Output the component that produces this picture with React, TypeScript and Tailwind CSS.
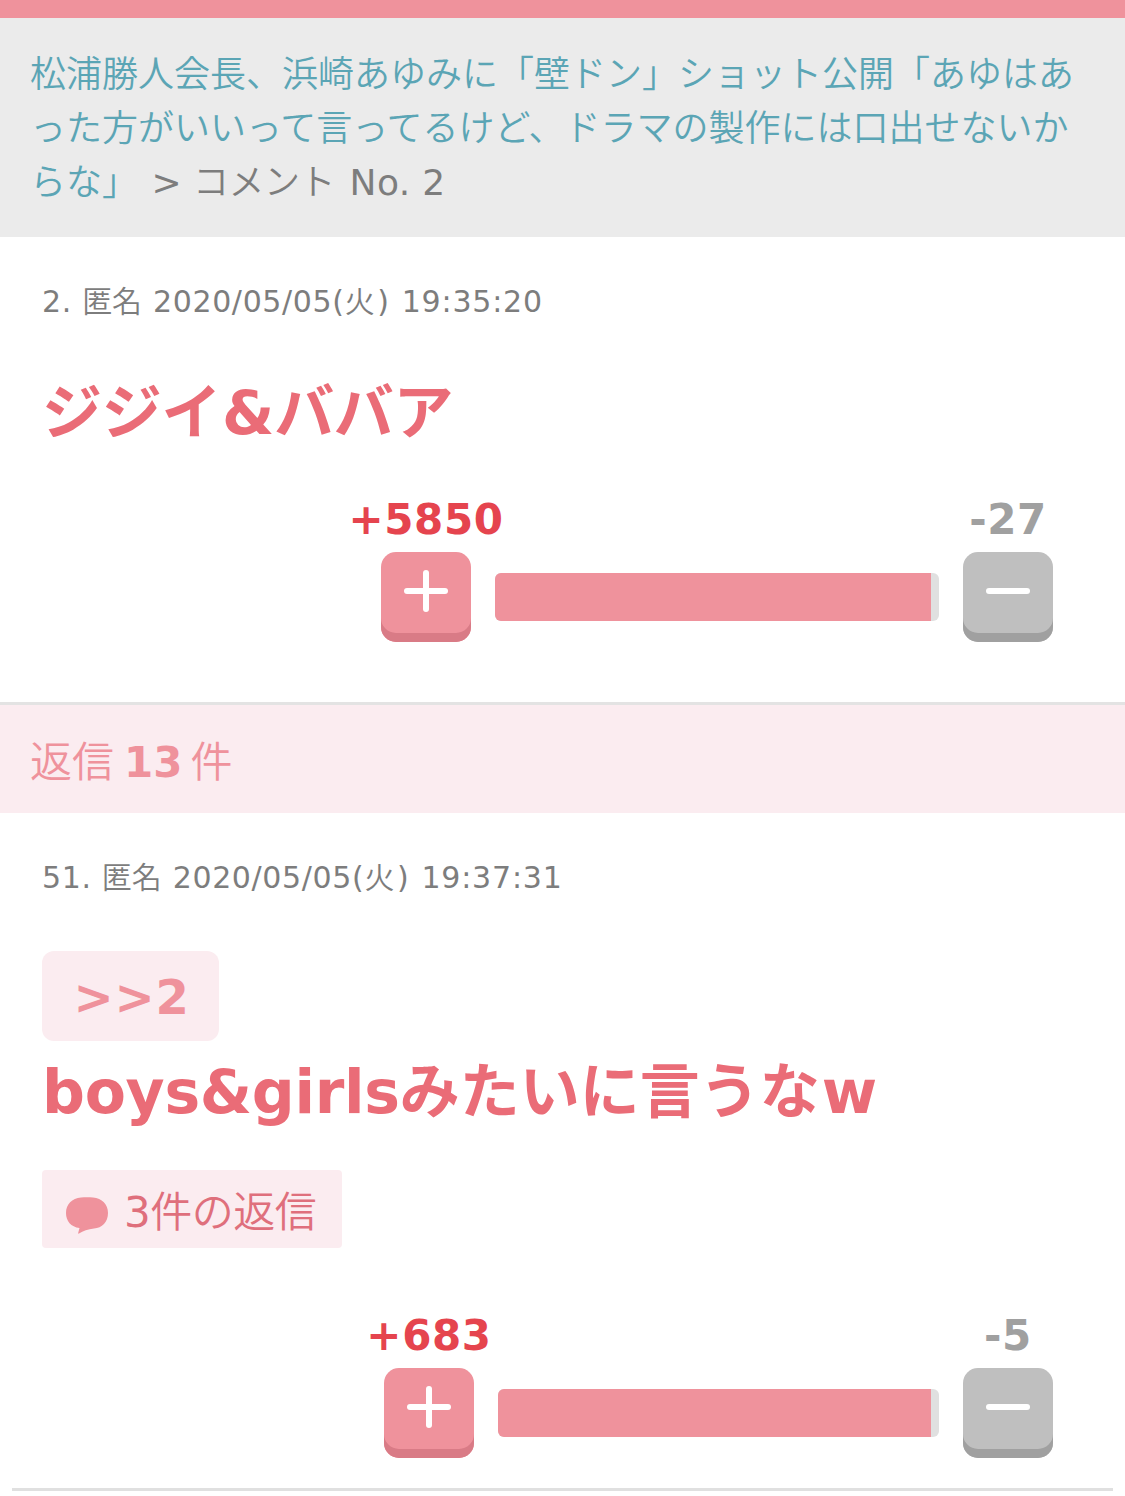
import clsx from "clsx"

type VoteProps = {
    plus: number
    minus: number
    barClass: string
}

const Meta = ({ no, time }: { no: number; time: string }) => {
    return (
        <div className="flex h-11 items-center pl-[42px] pt-0.5 text-[30px] leading-[44px] tracking-[0.65px] text-[#7d7d7d]">
            <p className="whitespace-pre">
                {no}. <span className="font-[350] tracking-[-0.2px]">匿名</span><span className="ml-px"> 2020/05/05(</span><span className="font-[350]">火</span><span className="ml-0.5">)</span>
            </p>
            <span className="ml-3 tracking-[0.8px]">{time}</span>
        </div>
    )
}

const VoteButton = ({ type }: { type: "plus" | "minus" }) => {
    return (
        <button
            type="button"
            className={clsx(
                "flex h-[90px] w-[90px] justify-center rounded-[15px] pt-[17px]",
                type === "plus"
                    ? "bg-[#ef929c] shadow-[inset_0_-9px_0_#d97b86]"
                    : "bg-[#bfbfbf] shadow-[inset_0_-9px_0_#a0a0a0]"
            )}
        >
            <svg width="44" height="44" viewBox="0 0 44 44" stroke="#fff" strokeWidth="6" strokeLinecap="round">
                <path d="M3 22H41" />
                {type === "plus" && <path d="M22 4V40" />}
            </svg>
        </button>
    )
}

const Votes = ({ plus, minus, barClass }: VoteProps) => {
    const percent = (plus / (plus + minus)) * 100

    return (
        <div className="flex items-end justify-end gap-6 pr-[72px]">
            <div className="flex w-[90px] flex-col items-center">
                <span className="whitespace-nowrap pt-0.5 text-[42px] font-bold leading-[64px] tracking-[0.6px] text-[#e5444e]">+{plus}</span>
                <VoteButton type="plus" />
            </div>
            <div className={clsx("mb-[21px] h-12 overflow-hidden rounded-md bg-[#e0e0e0]", barClass)}>
                {/* the minus side always keeps a visible sliver */}
                <div className="h-full max-w-[98.1%] bg-[#ef929c]" style={{ width: `${percent}%` }}></div>
            </div>
            <div className="flex w-[90px] flex-col items-center">
                <span className="whitespace-nowrap pt-0.5 text-[42px] font-bold leading-[64px] tracking-[0.6px] text-[#a0a0a0]">-{minus}</span>
                <VoteButton type="minus" />
            </div>
        </div>
    )
}

const Bubble = () => {
    return (
        <svg className="mt-1.5" width="42" height="37" viewBox="0 0 42 37" fill="#ef929c">
            <path d="M15 0.500C19 0 23 0 27 0.500C36 1.500 42 7 42 16C42 25 36 31 28 31.500C22 32 17 34 13 36.500C12.300 37 12 36.500 12.300 35.500L13.500 31C5 30 0 24 0 16C0 7 6 1.500 15 0.500Z" />
        </svg>
    )
}

const Header = () => {
    return (
        <header className="h-[237px] border-t-[18px] border-[#ef929c] bg-[#ebebeb] pl-[30px] pt-[30px] text-[36px] leading-[54px] text-[#7d7d7d]">
            <a href="#" className="font-[350] text-[#5ba5b5]">
                松浦勝人会長、浜崎あゆみに「壁ドン」ショット公開「あゆはあ<br />
                った方がいいって言ってるけど、ドラマの製作には口出せないか<br />
                らな」
            </a>
            <span className="ml-0.5 whitespace-pre"> &gt; <span className="font-[350] tracking-[-0.5px]">コメント</span> <span className="ml-[3px] tracking-[0.4px]">No. 2</span></span>
        </header>
    )
}

export default function App() {
    return (
        <div lang="ja" className="min-h-[1496px] w-[1125px] overflow-hidden bg-white font-['DejaVu_Sans','Noto_Sans_CJK_JP',sans-serif]">
            <Header />

            <article className="h-[465px] pt-[42px]">
                <Meta no={2} time="19:35:20" />
                <p className="mt-[45px] pl-[42px] text-[60px] font-bold leading-[90px] tracking-[-0.3px] text-[#ea6c77]">ジジイ<span className="ml-px">&amp;</span>ババア</p>
                <div className="mt-[28px]">
                    <Votes plus={5850} minus={27} barClass="w-[444px]" />
                </div>
            </article>

            <h2 className="flex h-[111px] items-center border-t-[3px] border-[#e3e3e3] bg-[#fbecf0] pl-[30px] pt-1.5 text-[42px] text-[#ef929c]">
                <span className="font-[350]">返信</span>
                <b className="ml-2.5 mr-2">13</b>
                <span className="font-[350]">件</span>
            </h2>

            <article className="pt-[42px]">
                <Meta no={51} time="19:37:31" />
                <div className="mt-[52px] pl-[42px]">
                    <a href="#" className="flex h-[90px] w-[177px] items-center justify-center rounded-xl bg-[#fbecf0] pl-0.5 pt-0.5 text-[48px] font-bold tracking-[0.8px] text-[#ef929c]">
                        &gt;&gt;2
                    </a>
                    <p className="mt-1.5 text-[60px] font-bold leading-[90px] text-[#ea6c77]"><span className="tracking-[-0.3px]">boys&amp;girls</span>みたいに言うな<span className="ml-0.5">w</span></p>
                    <a href="#" className="mt-[33px] flex h-[78px] w-[300px] items-center gap-4 rounded bg-[#fbecf0] pl-6 pt-1.5 text-[42px] text-[#df6f7c]">
                        <Bubble />
                        <span className="tracking-[-0.5px]">3<span className="font-[350]">件の返信</span></span>
                    </a>
                </div>
                <div className="mt-[54px]">
                    <Votes plus={683} minus={5} barClass="w-[441px]" />
                </div>
                <div className="mx-3 mt-[30px] h-[3px] bg-[#e0e0e0]"></div>
            </article>
        </div>
    )
}
